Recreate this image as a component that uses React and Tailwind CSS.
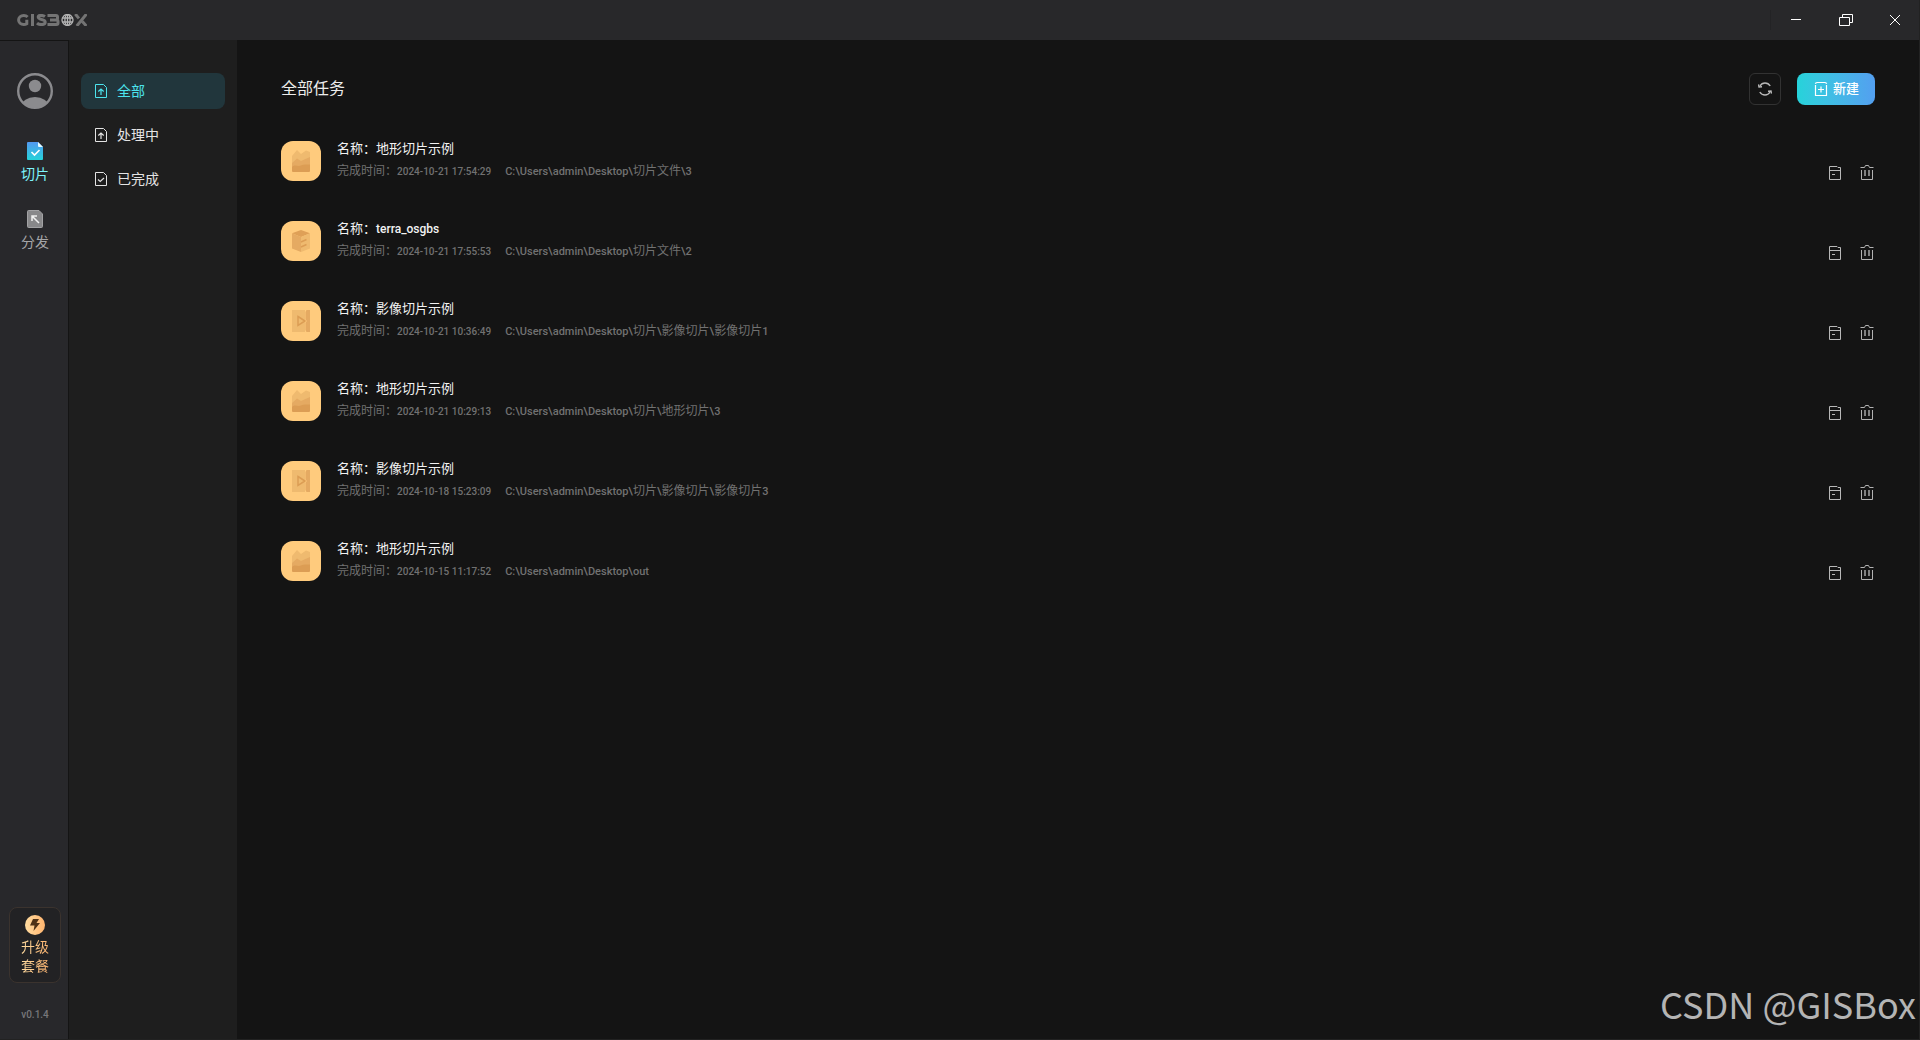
const CJK = 'font-["Liberation_Sans","Noto_Sans_CJK_SC",sans-serif]';
const LATIN = 'font-["Roboto","Noto_Sans_CJK_SC",sans-serif]';

const tasks = [
  { kind: 'terrain', name: '地形切片示例', time: '2024-10-21 17:54:29', path: 'C:\\Users\\admin\\Desktop\\切片文件\\3' },
  { kind: 'model', name: 'terra_osgbs', time: '2024-10-21 17:55:53', path: 'C:\\Users\\admin\\Desktop\\切片文件\\2' },
  { kind: 'image', name: '影像切片示例', time: '2024-10-21 10:36:49', path: 'C:\\Users\\admin\\Desktop\\切片\\影像切片\\影像切片1' },
  { kind: 'terrain', name: '地形切片示例', time: '2024-10-21 10:29:13', path: 'C:\\Users\\admin\\Desktop\\切片\\地形切片\\3' },
  { kind: 'image', name: '影像切片示例', time: '2024-10-18 15:23:09', path: 'C:\\Users\\admin\\Desktop\\切片\\影像切片\\影像切片3' },
  { kind: 'terrain', name: '地形切片示例', time: '2024-10-15 11:17:52', path: 'C:\\Users\\admin\\Desktop\\out' },
];

function Logo() {
  return (
    <svg width="70" height="12" viewBox="0 0 70 12" fill="none" stroke="#747474" strokeWidth="3" role="img" aria-label="GISBOX">
      <path d="M10.6 3C9.5 1.9 8.3 1.5 6.8 1.5 3.6 1.5 1.6 3.4 1.6 6s2 4.5 5.2 4.5c1.2 0 2.2-.3 3-.8V5.800" />
      <path d="M15.5 0v12" />
      <path d="M28 2.6c-1.200-.8-2.600-1.200-4-1.200-1.800 0-2.800.7-2.800 1.700 0 3.200 7 1.500 7 4.900 0 1.600-1.400 2.600-3.700 2.600-1.700 0-3.400-.5-4.500-1.500" />
      <path d="M30.5 1.5H39c1.200 0 1.500.6 1.500 1.500v1.400c0 1-.5 1.600-1.500 1.600h-6M39.500 6c1 0 1.500.6 1.500 1.600V9c0 1-.5 1.500-1.500 1.500h-9" />
      <path d="M69.5 0 59.8 12M58.3 0l3.600 4.400M65.4 7.600 69.400 12" />
      <g stroke="#b4b4b4" strokeWidth="1.3">
        <circle cx="50.5" cy="6" r="5.5" />
        <ellipse cx="50.5" cy="6" rx="2.6" ry="5.4" />
        <path d="M45.500 4h10M45.500 8h10M50.500 .5v11" />
      </g>
    </svg>
  );
}

function Avatar() {
  return (
    <svg width="36" height="36" viewBox="0 0 36 36">
      <defs><clipPath id="face"><circle cx="18" cy="18" r="17" /></clipPath></defs>
      <circle cx="18" cy="18" r="16.8" fill="none" stroke="#8b8b8e" strokeWidth="2.4" />
      <circle cx="18" cy="13" r="6.2" fill="#8b8b8e" />
      <ellipse cx="18" cy="33" rx="13.5" ry="9" fill="#8b8b8e" clipPath="url(#face)" />
    </svg>
  );
}

function SliceIcon() {
  return (
    <svg width="16" height="18" viewBox="0 0 16 18">
      <defs>
        <linearGradient id="slice" x1="0" y1="0" x2="0" y2="1">
          <stop offset="0" stopColor="#5398f0" /><stop offset="1" stopColor="#25d3da" />
        </linearGradient>
      </defs>
      <path d="M1 0h10l5 5v12a1 1 0 0 1-1 1H1a1 1 0 0 1-1-1V1a1 1 0 0 1 1-1z" fill="url(#slice)" />
      <path d="M11 0v4a1 1 0 0 0 1 1h4z" fill="#e6fbff" />
      <path d="m4.500 10 3 3 5-5" fill="none" stroke="#fff" strokeWidth="1.6" />
    </svg>
  );
}

function PublishIcon() {
  return (
    <svg width="16" height="18" viewBox="0 0 16 18" fill="none">
      <path d="M1.500 .5H12l3.500 3.500v12.500a1 1 0 0 1-1 1h-13a1 1 0 0 1-1-1v-15a1 1 0 0 1 1-1z" fill="#88888a" stroke="#a2a2a4" />
      <path d="M5 11V6h5M5 6l7 7" stroke="#f0f0f0" strokeWidth="1.5" />
    </svg>
  );
}

function DocIcon({ check }) {
  return (
    <svg width="12" height="14" viewBox="0 0 12 14" fill="none" stroke="currentColor">
      <path d="M.5 .5h8l3 3v10H.5z" />
      {check ? <path d="m3 7.500 2.200 2L9 6" strokeWidth="1.2" /> : <path d="M6 11V5.200M3.300 7.500 6 5l2.700 2.500" strokeWidth="1.2" />}
    </svg>
  );
}

function TaskIcon({ kind }) {
  return (
    <svg width="18" height="22" viewBox="0 0 18 22" aria-hidden="true">
      {kind === 'terrain' && (
        <>
          <path d="M0 6 5 0l4 4 5-3.500L18 2v12H0z" fill="#efba6f" />
          <path d="M0 13 5 8.500l4 2.500 9-4v10H0z" fill="#e5aa62" />
          <path d="M0 17c3-3 6 0 9-1.500s6-1 9-1V21a1 1 0 0 1-1 1H1a1 1 0 0 1-1-1z" fill="#dc9d54" />
        </>
      )}
      {kind === 'model' && (
        <>
          <path d="m9 0 9 3.200L9 7 0 3.200z" fill="#dfa057" />
          <path d="M0 3.200 9 7v15l-9-3.500z" fill="#e5aa62" />
          <path d="M18 3.200 9 7v15l9-3.500z" fill="#efba6f" />
          <path d="m9 12 5.500-2.500M9 17l5.500-2.500" stroke="#dc9d54" strokeWidth="1.4" />
        </>
      )}
      {kind === 'image' && (
        <>
          <path d="M0 0h13v22H0z" fill="#efba6f" />
          <path d="M14.500 0H18v22h-3.500l-1-2v-7.500L15 11l-1.500-1.500V2z" fill="#e5aa62" />
          <path d="m6 6.500 7 4.500-7 4.500z" fill="none" stroke="#dc9d54" strokeWidth="1.5" />
        </>
      )}
    </svg>
  );
}

function DetailIcon() {
  return (
    <svg width="12" height="14" viewBox="0 0 12 14" fill="none" stroke="#b8b8b8">
      <path d="M.5 .5H8l1 1h2.500v12H.5zM.5 4.500h11M3 8.500h3" />
    </svg>
  );
}

function TrashIcon() {
  return (
    <svg width="14" height="16" viewBox="0 0 14 16" fill="none" stroke="#b2b2b2">
      <path d="M.5 2.500h4l1-2h3l1 2h4M1.500 5v9.500h11V5" />
      <path d="M5 5v6M9 5v6" stroke="#808080" strokeWidth="2" />
    </svg>
  );
}

function NavItem({ active, check, children }) {
  return (
    <button className={`flex h-9 w-full items-center gap-2.5 rounded-lg px-3.5 text-sm ${active ? 'bg-[#21363c] text-[#4ce4ee]' : 'text-[#e4e4e4]'}`}>
      <DocIcon check={check} />
      {children}
    </button>
  );
}

export default function App() {
  return (
    <div className={`relative flex h-screen flex-col overflow-hidden border-r border-b border-[#222222] bg-[#141414] text-white ${CJK}`}>
      <header className="flex h-10 shrink-0 items-center justify-between bg-[#28282a] pl-[17px]">
        <Logo />
        <div className="flex h-full items-center">
          <span className="h-5 w-px bg-[#232325]" />
          <button aria-label="最小化" className="flex h-full w-[50px] items-center justify-center">
            <svg width="10" height="10" stroke="#fff"><path d="M0 4.500h10" /></svg>
          </button>
          <button aria-label="还原" className="flex h-full w-[50px] items-center justify-center">
            <svg width="14" height="12" fill="none" stroke="#fff"><path d="M.5 3.500h10v8H.5zM3.500 3V.5h10v8H11" /></svg>
          </button>
          <button aria-label="关闭" className="flex h-full w-12 items-center justify-center">
            <svg width="10" height="10" stroke="#fff"><path d="m0 0 10 10M10 0 0 10" /></svg>
          </button>
        </div>
      </header>

      <div className="flex min-h-0 flex-1">
        <aside className="flex w-[69px] shrink-0 flex-col items-center border-t border-r border-[#141414] bg-[#28282b] pt-8 pl-0.5">
          <button aria-label="账户"><Avatar /></button>
          <nav className="mt-[33px] flex flex-col gap-[26px] text-sm leading-5">
            <button className="flex flex-col items-center gap-1 text-[#7df3fa]"><SliceIcon />切片</button>
            <button className="flex flex-col items-center gap-1 text-[#a5a5a7]"><PublishIcon />分发</button>
          </nav>
          <button className="mt-auto flex h-[76px] w-[52px] flex-col items-center rounded-lg border border-[#3b332e] bg-[#222224] pt-[7px]">
            <svg width="20" height="20" viewBox="0 0 20 20">
              <defs><linearGradient id="gold"><stop offset="0" stopColor="#ffdca0" /><stop offset="1" stopColor="#ffb46e" /></linearGradient></defs>
              <circle cx="10" cy="10" r="10" fill="url(#gold)" />
              <path d="M8 4h6l-2.500 4H15l-6.500 8 1-5.500H5z" fill="#4f3216" />
            </svg>
            <span className="mt-[3px] bg-linear-to-r from-[#ffdca0] to-[#ffb46e] bg-clip-text text-sm leading-[19px] text-transparent">升级<br />套餐</span>
          </button>
          <span className={`mt-6 mb-4 text-[10px] leading-4 font-medium text-[#77777a] ${LATIN}`}>v0.1.4</span>
        </aside>

        <nav className="flex w-[168px] shrink-0 flex-col gap-2 bg-[#1e1e1e] px-3 pt-[33px]">
          <NavItem active>全部</NavItem>
          <NavItem>处理中</NavItem>
          <NavItem check>已完成</NavItem>
        </nav>

        <main className="min-w-0 flex-1 pt-[33px] pr-11 pl-11">
          <div className="flex h-8 items-center">
            <h1 className="text-base text-[#ededed]">全部任务</h1>
            <button aria-label="刷新" className="ml-auto flex size-8 items-center justify-center rounded-md border border-[#323232]">
              <svg width="14" height="14" viewBox="0 0 14 14" fill="none" stroke="#b8b8b8" strokeWidth="1.4">
                <path d="M2 4C3.200 1.800 5 1 7 1s4 1 5.200 3M12 10c-1.200 2.200-3 3-5 3s-4-1-5.200-3" />
                <path d="M.5 2.500 1 5l3-.2M13.500 11.500 13 9l-3 .2" />
              </svg>
            </button>
            <button className="ml-4 flex h-8 items-center gap-[5px] rounded-lg bg-linear-to-r from-[#25d3da] to-[#539ff0] px-4 pl-[17px] text-[13px] font-medium">
              <svg width="14" height="16" viewBox="0 0 14 16" fill="none" stroke="#fff" strokeWidth="1.2">
                <path d="M1 2.500 3 1.500h8l2 1M1.500 4v10.500h11V4M7 5.500v6M4 8.500h6" />
              </svg>
              新建
            </button>
          </div>

          <ul className="mt-9 flex flex-col gap-10">
            {tasks.map((t) => (
              <li key={t.name + t.time} className="flex h-10">
                <span className="flex size-10 shrink-0 items-center justify-center rounded-xl bg-[#ffcb7d]"><TaskIcon kind={t.kind} /></span>
                <div className="ml-4 min-w-0 flex-1">
                  <p className={`text-[13px] leading-4 text-[#f2f2f2] ${LATIN}`}>
                    名称：<span className={t.kind === 'model' ? 'text-xs font-medium' : ''}>{t.name}</span>
                  </p>
                  <p className={`mt-[5px] flex items-baseline gap-3.5 text-xs text-[#717171] ${LATIN}`}>
                    <span>完成时间：<span className="text-[10px] font-medium">{t.time}</span></span>
                    <span className='font-["Noto_Sans_CJK_SC",sans-serif]'>
                      {t.path.split(/([\u4e00-\u9fff]+)/).map((part, i) => (
                        <span key={i} className={i % 2 ? 'text-xs' : 'font-["Roboto",sans-serif] text-[11px] font-medium'}>{part}</span>
                      ))}
                    </span>
                  </p>
                </div>
                <div className="flex items-center gap-[19px] self-start pt-6 pr-px">
                  <button aria-label="详情"><DetailIcon /></button>
                  <button aria-label="删除"><TrashIcon /></button>
                </div>
              </li>
            ))}
          </ul>
        </main>
      </div>

      <span className='pointer-events-none absolute right-[3px] bottom-2.5 font-["Noto_Sans_CJK_SC",sans-serif] text-4xl leading-[52px] text-[#b4b4b4]'>CSDN @GISBox</span>
    </div>
  );
}
